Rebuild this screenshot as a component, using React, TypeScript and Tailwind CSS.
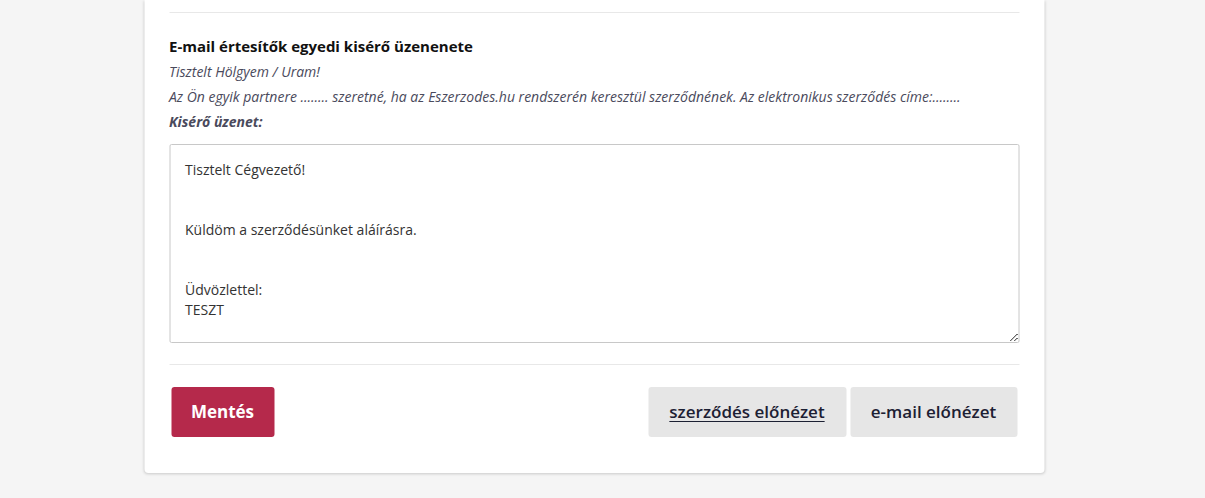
import React from "react"

const message = `Tisztelt Cégvezető!


Küldöm a szerződésünket aláírásra.


Üdvözlettel:
TESZT`

export default function App() {
  return (
    <div className="min-h-[498px] bg-[#f5f5f5] font-['Open_Sans',sans-serif]">
      <div className="mx-auto w-[900px] translate-x-[-8.5px] bg-white rounded-b-[4px] shadow-[0_1px_3px_rgba(0,0,0,0.18)] px-[25px] pt-3 pb-9">
        <div className="border-t border-[#e8e8e8]" />

        {/* Kísérő üzenet */}
        <div className="mt-[23px]">
          <h3 className="text-[15px] leading-[20px] font-bold text-[#111]">
            E-mail értesítők egyedi kisérő üzenenete
          </h3>
          <div className="mt-[3px] text-[14px] leading-[25px] italic text-[#4a4a5c]">
            <p>Tisztelt Hölgyem / Uram!</p>
            <p>
              Az Ön egyik partnere ........ szeretné, ha az Eszerzodes.hu rendszerén keresztül szerződnének. Az elektronikus szerződés címe:........
            </p>
            <p className="font-bold">Kisérő üzenet:</p>
          </div>
          <textarea
            defaultValue={message}
            className="mt-[10px] block w-full h-[199px] rounded-[2px] border border-[#c8c8c8] px-[15px] py-[15px] text-[14px] leading-[20px] text-[#333] outline-none resize-y"
          />
        </div>

        <div className="mt-[21px] border-t border-[#e8e8e8]" />

        {/* Gombok */}
        <div className="mt-[22px] flex items-center justify-between pl-[2px] pr-[1px]">
          <button className="h-[50px] w-[103px] rounded-[3px] bg-[#b5294b] text-white text-[17px] font-bold">
            Mentés
          </button>
          <div className="flex gap-1 mr-px">
            <button className="h-[50px] w-[198px] rounded-[3px] bg-[#e6e6e6] text-[#1c2033] text-[17px] font-semibold underline underline-offset-[3px]">
              szerződés előnézet
            </button>
            <button className="h-[50px] w-[167px] rounded-[3px] bg-[#e6e6e6] text-[#1c2033] text-[17px] font-semibold">
              e-mail előnézet
            </button>
          </div>
        </div>
      </div>
    </div>
  )
}
